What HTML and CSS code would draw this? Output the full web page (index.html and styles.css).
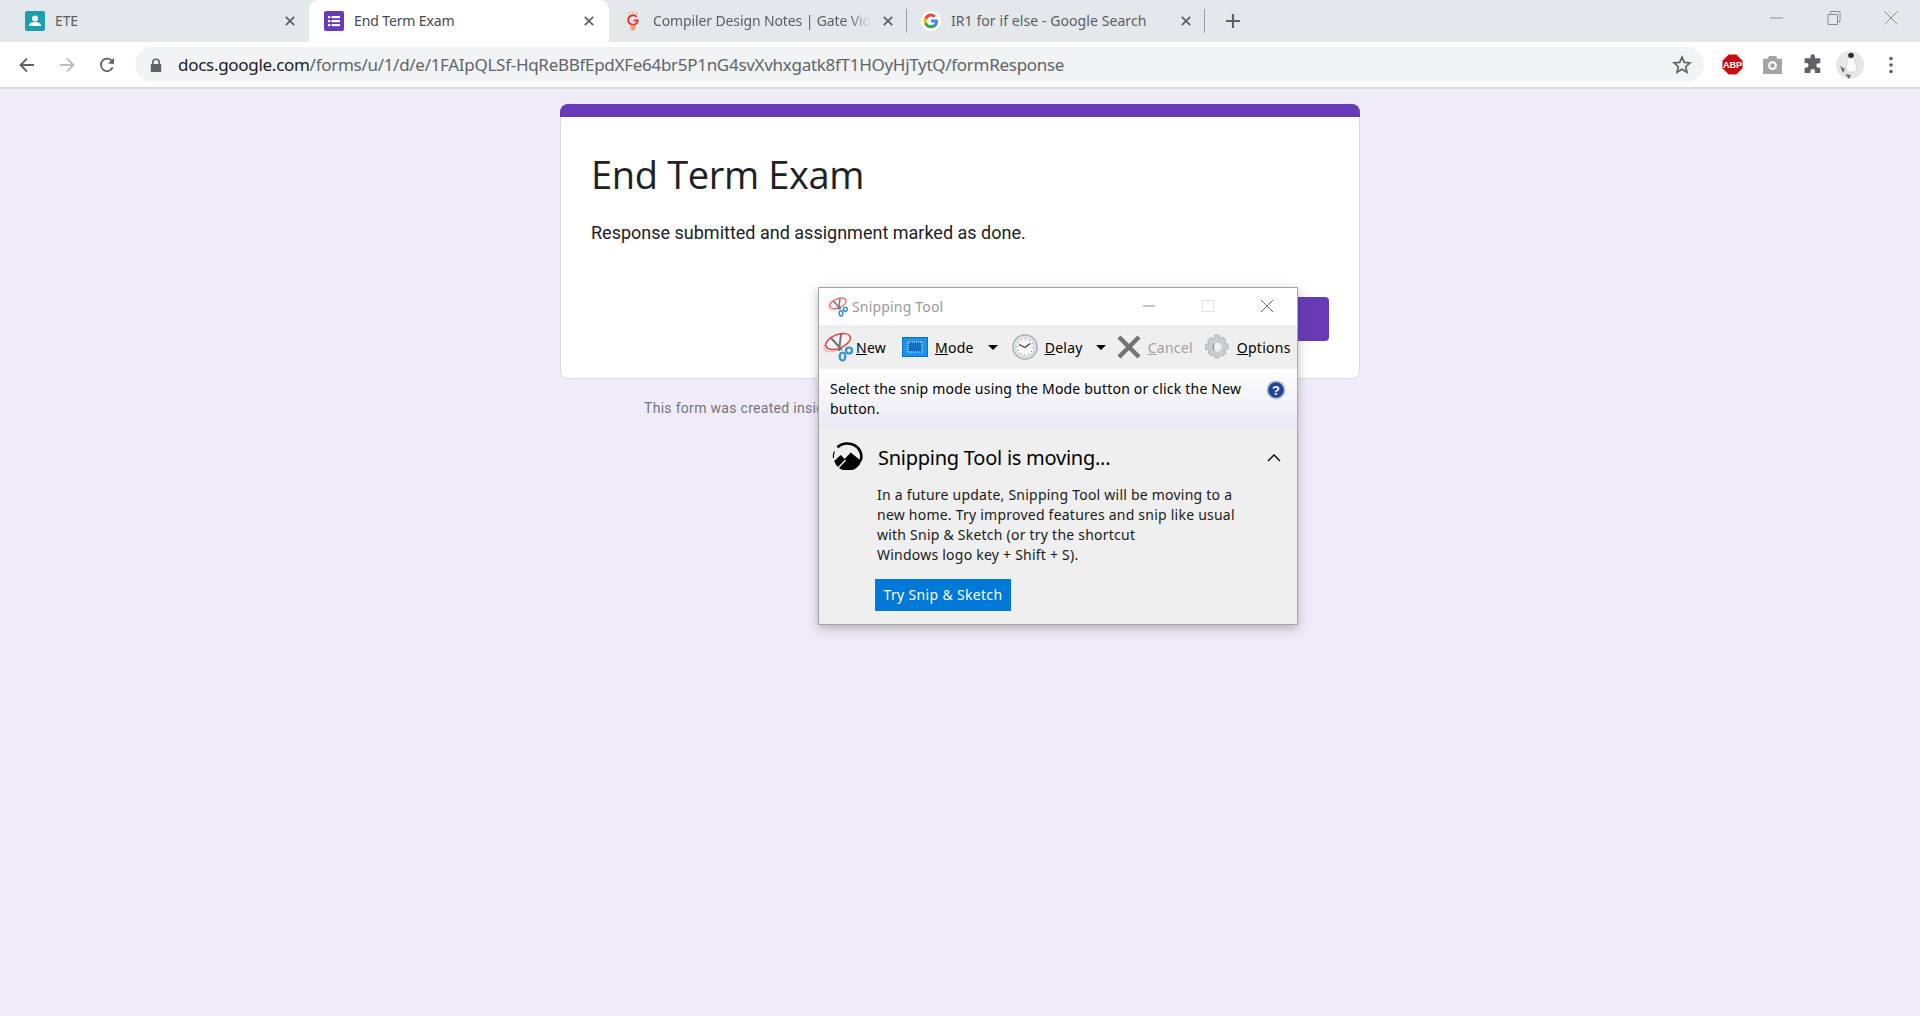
FILE: index.html
```html
<!DOCTYPE html>
<html lang="en">
<head>
<meta charset="utf-8">
<title>End Term Exam</title>
<link rel="stylesheet" href="styles.css">
</head>
<body>
<header class="tabstrip">
  <div class="tab tab-first">
    <svg class="fav" viewBox="0 0 20 20"><rect width="20" height="20" rx="2" fill="#1a9fae"/><circle cx="10" cy="7.500" r="3" fill="#fff"/><path d="M4 15c0-3 3-4 6-4s6 1 6 4z" fill="#fff"/></svg>
    <span class="tab-title">ETE</span>
    <svg class="close" viewBox="0 0 12 12"><path d="M1 1l10 10M11 1L1 11"/></svg>
  </div>
  <div class="tab tab-active">
    <svg class="fav" viewBox="0 0 20 20"><rect width="20" height="20" rx="2" fill="#673ab7"/><g fill="#fff"><rect x="4" y="5" width="2.200" height="2.200"/><rect x="7.500" y="5" width="8.500" height="2.200"/><rect x="4" y="9" width="2.200" height="2.200"/><rect x="7.500" y="9" width="8.500" height="2.200"/><rect x="4" y="13" width="2.200" height="2.200"/><rect x="7.500" y="13" width="8.500" height="2.200"/></g></svg>
    <span class="tab-title">End Term Exam</span>
    <svg class="close" viewBox="0 0 12 12"><path d="M1 1l10 10M11 1L1 11"/></svg>
  </div>
  <div class="tab tab-third">
    <svg class="fav" viewBox="0 0 20 20"><path d="M6 3l1-2M10 2.500V.5M14 3l-1-2" stroke="#f2a25c" stroke-width="1.200" fill="none"/><path d="M13.800 6A4.800 4.800 0 1 0 14.800 9.500H10.500" fill="none" stroke="#e5382f" stroke-width="2"/><path d="M7 14.500h6l-1.500 5h-3z" fill="#f2a25c"/></svg>
    <span class="tab-title tab-fade">Compiler Design Notes | Gate Vid</span>
    <svg class="close" viewBox="0 0 12 12"><path d="M1 1l10 10M11 1L1 11"/></svg>
    <i class="tab-sep"></i>
  </div>
  <div class="tab tab-fourth">
    <svg class="fav" viewBox="0 0 20 20"><circle cx="10" cy="10" r="10" fill="#fff"/><path d="M17 10.200c0-.6 0-1.100-.2-1.600H10v3h3.900a3.400 3.400 0 0 1-1.500 2.200v1.900h2.400c1.400-1.300 2.200-3.200 2.200-5.500z" fill="#4285f4"/><path d="M10 17.200c2 0 3.600-.7 4.800-1.800l-2.400-1.900c-.6.500-1.500.8-2.400.8-1.900 0-3.500-1.300-4.100-3H3.400v2a7.200 7.200 0 0 0 6.600 3.900z" fill="#34a853"/><path d="M5.900 11.300a4.300 4.300 0 0 1 0-2.700v-2H3.400a7.200 7.200 0 0 0 0 6.700z" fill="#fbbc05"/><path d="M10 5.600c1.100 0 2 .4 2.800 1.100l2.100-2.100A7.200 7.200 0 0 0 3.400 6.600l2.500 2c.6-1.800 2.200-3 4.100-3z" fill="#ea4335"/></svg>
    <span class="tab-title">IR1 for if else - Google Search</span>
    <svg class="close" viewBox="0 0 12 12"><path d="M1 1l10 10M11 1L1 11"/></svg>
    <i class="tab-sep"></i>
  </div>
  <svg class="new-tab" viewBox="0 0 14 14"><path d="M7 0v14M0 7h14"/></svg>
  <div class="win-controls">
    <svg viewBox="0 0 14 14"><path d="M0 7h13"/></svg>
    <svg viewBox="0 0 14 14"><path d="M3.500 3V.5h9.500v10h-2.500M1 3.500h9.500v10H1z"/></svg>
    <svg viewBox="0 0 14 14"><path d="M.5.500l13 13M13.500.500l-13 13"/></svg>
  </div>
</header>
<nav class="toolbar">
  <svg class="nav-ico" viewBox="0 0 16 16"><path d="M15 8H2M8 1.500L1.500 8 8 14.500" fill="none" stroke="#5f6368" stroke-width="1.800"/></svg>
  <svg class="nav-ico" viewBox="0 0 16 16"><path d="M1 8h13M8 1.500L14.500 8 8 14.500" fill="none" stroke="#bcbfc3" stroke-width="1.800"/></svg>
  <svg class="nav-ico" viewBox="0 0 16 16"><path d="M13.700 10.500A6.200 6.200 0 1 1 13 4" fill="none" stroke="#5f6368" stroke-width="1.800"/><path d="M15 .8v6H9z" fill="#5f6368"/></svg>
  <div class="omnibox">
    <svg class="lock" viewBox="0 0 12 14"><path d="M2 6V4.500a4 4 0 0 1 8 0V6h1.200v8H.8V6zm1.600 0h4.800V4.500a2.400 2.400 0 0 0-4.800 0z" fill="#5f6368"/></svg>
    <span class="url"><span class="url-host">docs.google.com</span>/forms/u/1/d/e/1FAIpQLSf-HqReBBfEpdXFe64br5P1nG4svXvhxgatk8fT1HOyHjTytQ/formResponse</span>
    <svg class="star" viewBox="0 0 20 20"><path d="M10 2.200l2.300 5.200 5.700.5-4.300 3.800 1.300 5.600-5-3-5 3 1.300-5.600L2 7.900l5.700-.5z" fill="none" stroke="#5f6368" stroke-width="1.700"/></svg>
  </div>
  <div class="exts">
    <svg class="ext" viewBox="0 0 22 22"><path d="M7 .5h8L21.500 7v8L15 21.500H7L.5 15V7z" fill="#c70d0d"/><text class="abp" x="11" y="14.800" text-anchor="middle">ABP</text></svg>
    <svg class="ext" viewBox="0 0 20 20"><path d="M1 4.500h4.500l1-2.500h7l1 2.500H19V19H1z" fill="#a2a4a6"/><circle cx="10" cy="11" r="4.200" fill="#fff"/><circle cx="10" cy="11" r="2.300" fill="#a2a4a6"/></svg>
    <svg class="ext" viewBox="0 0 20 20"><path d="M8 2.500a2.200 2.200 0 0 1 4.400 0V4h5v4.800h-1.600a2.200 2.200 0 0 0 0 4.400h1.600V18h-5v-1.500a2.200 2.200 0 0 0-4.400 0V18H2.500v-5H4a2.200 2.200 0 0 0 0-4.400H2.500V4H8z" fill="#5f6368"/></svg>
    <svg class="avatar" viewBox="0 0 28 28"><circle cx="14" cy="14" r="14" fill="#e6e8e8"/><circle cx="15" cy="4.500" r="2.800" fill="#2a2a2a"/><path d="M12 7h6l3 10-2 4h-8l-1-5z" fill="#fbfbfb" stroke="#c4c4c4" stroke-width=".6"/><path d="M4 15l5 3-2 4zM9 23l6 1-2 4z" fill="#6a6a6a"/></svg>
    <svg class="menu" viewBox="0 0 4 18"><circle cx="2" cy="2.500" r="1.800"/><circle cx="2" cy="9" r="1.800"/><circle cx="2" cy="15.500" r="1.800"/></svg>
  </div>
</nav>
<main class="page">
  <section class="card">
    <div class="card-band"></div>
    <div class="card-body">
      <h1 class="card-title">End Term Exam</h1>
      <p class="card-msg">Response submitted and assignment marked as done.</p>
      <div class="card-actions"><span class="card-btn"></span></div>
    </div>
  </section>
  <p class="foot">This form was created inside of</p>
</main>
<aside class="snip">
  <div class="snip-title">
    <svg class="snip-logo" viewBox="0 0 30 30"><use href="#scissors"/></svg>
    <span class="snip-name">Snipping Tool</span>
    <div class="snip-ctrl">
      <svg viewBox="0 0 12 12"><path d="M0 6h12" stroke="#8d8d8d"/></svg>
      <svg viewBox="0 0 12 12"><rect x=".5" y=".5" width="11" height="11" fill="none" stroke="#e2e2e2"/></svg>
      <svg viewBox="0 0 12 12"><path d="M0 0l12 12M12 0L0 12" stroke="#6f6f6f"/></svg>
    </div>
  </div>
  <div class="snip-tools">
    <span class="tool tool-new">
      <svg class="ico-new" viewBox="0 0 30 30"><defs><g id="scissors"><ellipse cx="11" cy="13" rx="10.500" ry="6" transform="rotate(-22 11 13)" fill="#fdeeee" stroke="#f3aeae" stroke-width="1.200"/><ellipse cx="15" cy="9.500" rx="13" ry="6.800" transform="rotate(-22 15 9.500)" fill="#f7f3f3" stroke="#e4393c" stroke-width="1.400"/><path d="M8 6l11 12M18 2l-2 17" stroke="#737373" stroke-width="2"/><ellipse cx="19.500" cy="24.500" rx="2.800" ry="4" fill="none" stroke="#2b90d9" stroke-width="2.200"/><circle cx="26" cy="18.500" r="3" fill="none" stroke="#2b90d9" stroke-width="2.200"/></g></defs><use href="#scissors"/></svg>
      <span><u>N</u>ew</span>
    </span>
    <span class="tool tool-mode">
      <svg class="ico-mode" viewBox="0 0 26 20"><rect x=".5" y=".5" width="25" height="19" fill="#1c93ee" stroke="#0d6fb8"/><rect x="6" y="5" width="14" height="10" fill="#0f6fcb" stroke="#fff" stroke-dasharray="1 1"/></svg>
      <span><u>M</u>ode</span>
      <i class="caret"></i>
    </span>
    <span class="tool tool-delay">
      <svg class="ico-clock" viewBox="0 0 26 26"><circle cx="13" cy="13" r="12" fill="#e6ecec" stroke="#a5b1b5" stroke-width="1.600"/><circle cx="13" cy="13" r="9.500" fill="#fbfbfb" stroke="#c9ced0"/><circle cx="13" cy="13" r="7.800" fill="none" stroke="#8a8a8a" stroke-width="1.200" stroke-dasharray="1 3.080"/><path d="M13 13.500L7 10.500M13 13.500l5-4" stroke="#333" stroke-width="1.200"/></svg>
      <span><u>D</u>elay</span>
      <i class="caret"></i>
    </span>
    <span class="tool tool-cancel">
      <svg class="ico-x" viewBox="0 0 24 24"><path d="M2 2l20 20M22 2L2 22" stroke="#747474" stroke-width="4.500"/></svg>
      <span><u>C</u>ancel</span>
    </span>
    <span class="tool tool-options">
      <svg class="ico-gear" viewBox="0 0 24 26"><path d="M10 1h4l1 3.500 3-1.500 3 3-1.500 3 3.500 1v5l-3.500 1 1.500 3-3 3-3-1.500-1 3.500h-4l-1-3.500-3 1.500-3-3 1.500-3L.5 15.500v-5l3.500-1-1.500-3 3-3 3 1.500z" fill="#c9cdd0" stroke="#a9adb0" stroke-width=".8"/><circle cx="12" cy="13" r="4.500" fill="#f0f0f0"/><path d="M10.500 8.800a4.500 4.500 0 0 0 0 8.400 6 6 0 0 1 0-8.400z" fill="#7e8284"/></svg>
      <span><u>O</u>ptions</span>
    </span>
  </div>
  <div class="snip-info">
    <p class="snip-hint">Select the snip mode using the Mode button or click the New button.</p>
    <svg class="ico-help" viewBox="0 0 20 20"><circle cx="10" cy="10" r="9.500" fill="#b9bfc9"/><circle cx="10" cy="10" r="7.800" fill="#20429c"/><text class="help-q" x="10" y="14.500" text-anchor="middle">?</text></svg>
  </div>
  <div class="snip-notice">
    <div class="notice-head">
      <svg class="ico-sketch" viewBox="0 0 32 28"><path d="M5.400 5.300A14 13 0 0 1 28.500 18.900" fill="none" stroke="#000" stroke-width="2.600"/><path d="M2.400 9.500A14 13 0 0 0 1.500 16" fill="none" stroke="#000" stroke-width="1.200"/><path d="M2.200 19L8.700 13l4 4 6-6.500L29.300 19A14 13 0 0 1 2.200 19z" fill="#000"/><path d="M6 26L13.500 18" stroke="#efefef" stroke-width="1.400"/></svg>
      <span class="notice-title">Snipping Tool is moving...</span>
      <svg class="ico-chev" viewBox="0 0 14 8"><path d="M1 7l6-6 6 6" fill="none" stroke="#000" stroke-width="1.300"/></svg>
    </div>
    <p class="notice-text">In a future update, Snipping Tool will be moving to a<br>new home. Try improved features and snip like usual<br>with Snip &amp; Sketch (or try the shortcut<br>Windows logo key + Shift + S).</p>
    <span class="notice-btn">Try Snip &amp; Sketch</span>
  </div>
</aside>
</body>
</html>
```
FILE: styles.css
```css
* { box-sizing: border-box; }
html, body { margin: 0; height: 100%; }
body { position: relative; width: 1920px; height: 1016px; overflow: hidden; background: #f0ebf8; font-family: "Open Sans", "Noto Sans", sans-serif; }

.tabstrip { height: 42px; background: #e5e8eb; display: flex; align-items: center; }
.tab { height: 42px; display: flex; align-items: center; position: relative; color: #5a5e63; flex: none; }
.tab-first { width: 309px; padding-left: 25px; }
.tab-active { width: 300px; padding-left: 15px; background: #fff; border-radius: 9px 9px 0 0; color: #45494e; }
.tab-third { width: 298px; padding-left: 14px; }
.tab-fourth { width: 298px; padding-left: 14px; }
.fav { width: 20px; height: 20px; flex: none; }
.tab-title { margin: 0 0 2px 10px; white-space: nowrap; font-family: "Noto Sans", sans-serif; font-size: 14px; letter-spacing: -.12px; }
.tab-fourth .tab-title { letter-spacing: .08px; }
.tab-fade { width: 218px; overflow: hidden; -webkit-mask-image: linear-gradient(90deg, #000 90%, transparent); mask-image: linear-gradient(90deg, #000 90%, transparent); }
.close { width: 10px; height: 10px; position: absolute; right: 14px; top: 16px; fill: none; stroke: #5f6368; stroke-width: 2.200; }
.tab-active .close { right: 15px; }
.tab-sep { position: absolute; right: 0; top: 9px; width: 1px; height: 24px; background: #9aa0a6; }
.new-tab { width: 14px; height: 14px; margin-left: 21px; fill: none; stroke: #5f6368; stroke-width: 2.200; }
.win-controls { margin-left: auto; display: flex; gap: 43px; padding-right: 22px; margin-top: -6px; }
.win-controls svg { width: 14px; height: 14px; fill: none; stroke: #8b8e91; stroke-width: 1; }

.toolbar { height: 47px; background: #fff; display: flex; align-items: center; padding: 5px 0 7px 19px; box-shadow: inset 0 -2px 0 #dadce0; }
.nav-ico { width: 16px; height: 16px; margin-right: 24px; flex: none; }
.omnibox { width: 1569px; height: 35px; margin-left: -4px; background: #f1f3f4; border-radius: 18px; display: flex; align-items: center; padding: 0 12px 0 15px; flex: none; }
.lock { width: 12px; height: 14px; flex: none; }
.url { margin-left: 16px; font-family: "Noto Sans", sans-serif; font-size: 17px; letter-spacing: -.29px; color: #5f6368; white-space: nowrap; }
.url-host { color: #202124; }
.star { width: 20px; height: 20px; margin-left: auto; }
.exts { display: flex; align-items: center; margin-left: 18px; flex: none; }
.ext { width: 21px; height: 21px; margin-right: 19px; flex: none; }
.abp { font-family: "Liberation Sans", sans-serif; font-size: 9.500px; font-weight: 700; fill: #fff; }
.avatar { width: 28px; height: 28px; margin-left: -6px; flex: none; }
.menu { width: 4px; height: 18px; margin-left: 25px; fill: #5f6368; flex: none; }

.card { width: 800px; margin: 15px auto 0; }
.card-band { height: 13px; background: #673ab7; border-radius: 8px 8px 0 0; }
.card-body { height: 262px; background: #fff; border: 1px solid #dadce0; border-top: 0; border-radius: 0 0 8px 8px; padding: 0 30px; display: flex; flex-direction: column; }
.card-title { margin: 32px 0 0; font-family: "Open Sans", sans-serif; font-weight: 400; font-size: 38px; line-height: 50px; color: #202124; letter-spacing: -.35px; }
.card-msg { margin: 22px 0 0; font-family: Roboto, sans-serif; font-size: 18px; line-height: 24px; color: #202124; }
.card-actions { margin-top: auto; margin-bottom: 37px; display: flex; justify-content: flex-end; }
.card-btn { width: 120px; height: 44px; background: #673ab7; border-radius: 4px; }
.foot { width: 800px; margin: 20px auto 0; padding-left: 84px; font-family: Roboto, sans-serif; font-size: 14px; line-height: 18px; color: #70757a; letter-spacing: .3px; }

.snip { position: absolute; left: 818px; top: 287px; width: 480px; height: 338px; border: 1px solid #a5a5a8; background: #efefef; box-shadow: 0 3px 10px rgba(60, 60, 70, .35); font-family: "Noto Sans", "Open Sans", sans-serif; color: #000; display: flex; flex-direction: column; }
.snip-title { height: 37px; background: #fff; display: flex; align-items: center; padding-left: 9px; flex: none; }
.snip-logo { width: 20px; height: 20px; }
.snip-name { margin-left: 4px; font-size: 14px; letter-spacing: .18px; color: #99999d; }
.snip-ctrl { margin-left: auto; display: flex; gap: 47px; padding: 0 24px 2px 0; }
.snip-ctrl svg { width: 12px; height: 12px; }
.snip-tools { height: 44px; display: flex; align-items: center; font-size: 14px; letter-spacing: .25px; padding-left: 4px; flex: none; }
.tool { display: flex; align-items: center; flex: none; }
.ico-new { width: 30px; height: 30px; }
.tool-new span { margin-left: 3px; }
.tool-mode { margin-left: 16px; }
.ico-mode { width: 26px; height: 20px; }
.tool-mode span { margin-left: 7px; }
.caret { width: 0; height: 0; margin-left: 14px; border: 5px solid transparent; border-top: 5px solid #000; border-bottom: 0; }
.tool-delay { margin-left: 14px; }
.ico-clock { width: 26px; height: 26px; }
.tool-delay span { margin-left: 7px; }
.tool-delay .caret { margin-left: 13px; }
.tool-cancel { margin-left: 11px; color: #a0a0a0; }
.ico-x { width: 24px; height: 24px; }
.tool-cancel span { margin-left: 7px; }
.tool-options { margin-left: 12px; }
.ico-gear { width: 24px; height: 26px; }
.tool-options span { margin-left: 8px; }
.snip-info { height: 59px; background: linear-gradient(#fff, #e9e9f4); padding: 0 11px; flex: none; position: relative; }
.snip-hint { margin: 10px 0 0; font-size: 14px; line-height: 20px; width: 440px; letter-spacing: .2px; }
.ico-help { position: absolute; right: 11px; top: 11px; width: 20px; height: 20px; }
.help-q { font-family: "Liberation Sans", sans-serif; font-weight: 700; font-size: 13px; fill: #fff; }
.snip-notice { padding-left: 58px; position: relative; flex: 1; }
.notice-head { height: 57px; display: flex; align-items: center; }
.ico-sketch { position: absolute; left: 13px; top: 14px; width: 32px; height: 28px; }
.notice-title { font-size: 20px; letter-spacing: -.25px; margin: 1px 0 0 1px; }
.ico-chev { position: absolute; right: 16px; top: 26px; width: 14px; height: 8px; }
.notice-text { margin: 0; font-size: 14px; line-height: 20px; letter-spacing: .23px; color: #1a1a1a; }
.notice-btn { display: inline-block; margin: 14px 0 0 -2px; width: 136px; height: 32px; line-height: 31px; background: #0078d7; color: #fff; font-size: 14px; text-align: center; letter-spacing: .33px; }
```
